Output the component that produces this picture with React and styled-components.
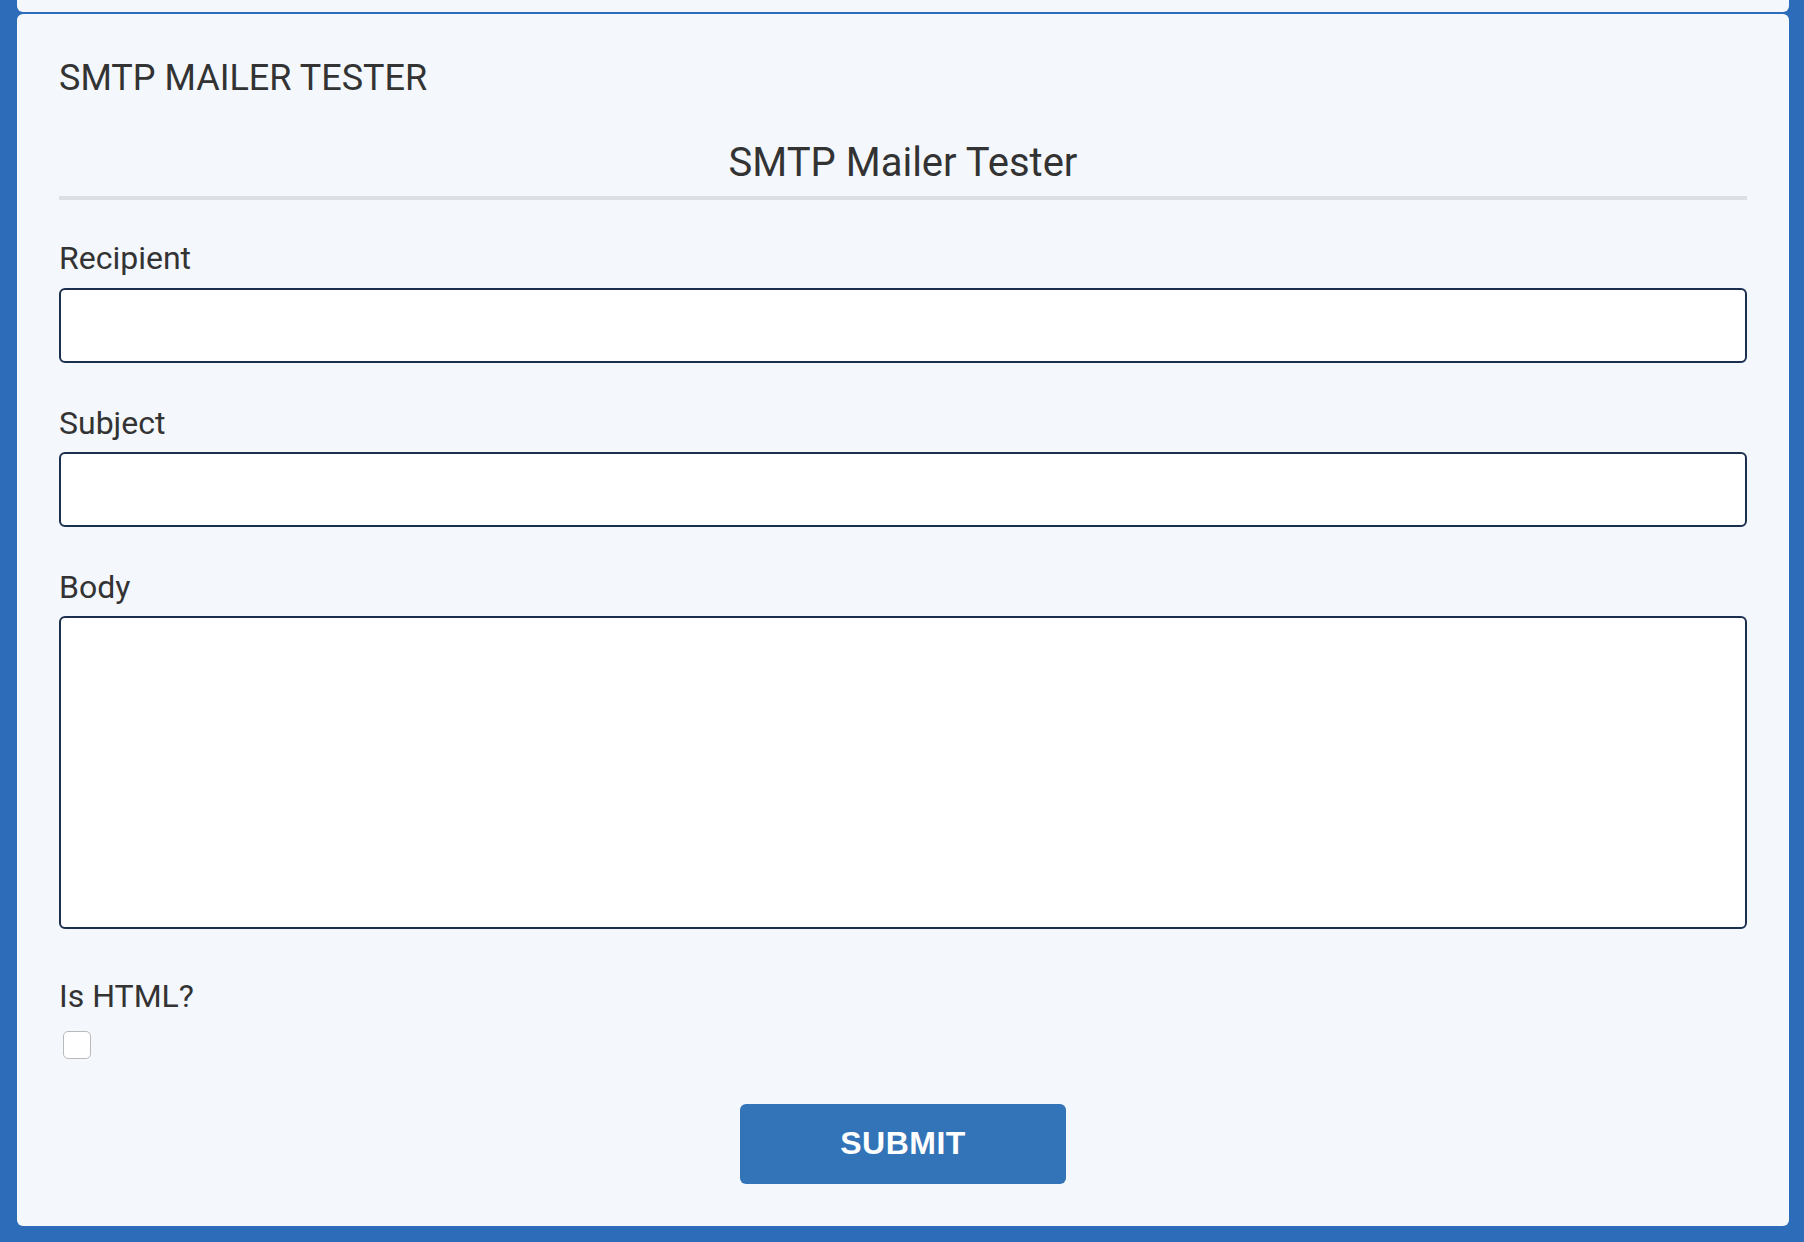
import React, { useState } from 'react'
import styled, { createGlobalStyle } from 'styled-components'

const GlobalStyle = createGlobalStyle`
  html, body {
    margin: 0;
    background: #2c6cb9;
  }
  body {
    font-family: Roboto, "Liberation Sans", sans-serif;
    color: #333;
  }
`

const Page = styled.div`
  padding: 0 15px 16px 17px;
  min-height: 1242px;
  box-sizing: border-box;
`

const PrevCard = styled.div`
  height: 12px;
  background: #f4f8fd;
  border-radius: 0 0 6px 6px;
  margin-bottom: 2px;
`

const Card = styled.div`
  background: #f4f8fd;
  border-radius: 6px;
  padding: 43px 42px 42px;
`

const PageTitle = styled.h1`
  margin: 0 0 39px;
  font-size: 36px;
  font-weight: 400;
  line-height: 1.2;
  color: #333;
`

const FormHeading = styled.h2`
  margin: 0 0 10px;
  padding-bottom: 9px;
  border-bottom: 4px solid #dcdfe3;
  text-align: center;
  font-size: 40px;
  font-weight: 400;
  line-height: 1.2;
  color: #333;
`

const Form = styled.form`
  display: flex;
  flex-direction: column;
  padding-top: 29px;
`

const Field = styled.div`
  display: flex;
  flex-direction: column;
  gap: ${p => p.$inner || 10}px;
  margin-bottom: ${p => p.$gap || 41}px;
`

const Label = styled.label`
  font-size: 32px;
  line-height: 1.2;
  color: #333;
`

const TextInput = styled.input`
  box-sizing: border-box;
  height: 75px;
  width: 100%;
  border: 2px solid #1b2f4e;
  border-radius: 6px;
  background: #fff;
  font: inherit;
  font-size: 30px;
  padding: 0 16px;
  outline: none;
`

const TextArea = styled.textarea`
  display: block;
  box-sizing: border-box;
  height: 313px;
  width: 100%;
  border: 2px solid #1b2f4e;
  border-radius: 6px;
  background: #fff;
  font: inherit;
  font-size: 30px;
  padding: 12px 16px;
  resize: none;
  outline: none;
`

const CheckBox = styled.input`
  appearance: none;
  margin: 0 0 0 4px;
  width: 28px;
  height: 28px;
  border: 1.5px solid #b9b9b9;
  border-radius: 5px;
  background: #fff;
  box-sizing: border-box;
  &:checked {
    background: #3374b8;
    border-color: #3374b8;
  }
`

const SubmitButton = styled.button`
  align-self: center;
  width: 326px;
  height: 80px;
  border: none;
  border-radius: 6px;
  background: #3374b8;
  color: #fff;
  font-family: "Liberation Sans", Arial, sans-serif;
  font-weight: 700;
  font-size: 32px;
  letter-spacing: 0.5px;
  cursor: pointer;
`

export default function App() {
  const [isHtml, setIsHtml] = useState(false)

  return (
    <Page>
      <GlobalStyle />
      <PrevCard />
      <Card>
        <PageTitle>SMTP MAILER TESTER</PageTitle>
        <FormHeading>SMTP Mailer Tester</FormHeading>
        <Form onSubmit={e => e.preventDefault()}>
          <Field>
            <Label htmlFor='recipient'>Recipient</Label>
            <TextInput id='recipient' type='text' />
          </Field>
          <Field>
            <Label htmlFor='subject'>Subject</Label>
            <TextInput id='subject' type='text' />
          </Field>
          <Field $gap={48}>
            <Label htmlFor='body'>Body</Label>
            <TextArea id='body' />
          </Field>
          <Field $gap={45} $inner={15}>
            <Label htmlFor='ishtml'>Is HTML?</Label>
            <CheckBox id='ishtml' type='checkbox' checked={isHtml} onChange={() => setIsHtml(!isHtml)} />
          </Field>
          <SubmitButton type='submit'>SUBMIT</SubmitButton>
        </Form>
      </Card>
    </Page>
  )
}
